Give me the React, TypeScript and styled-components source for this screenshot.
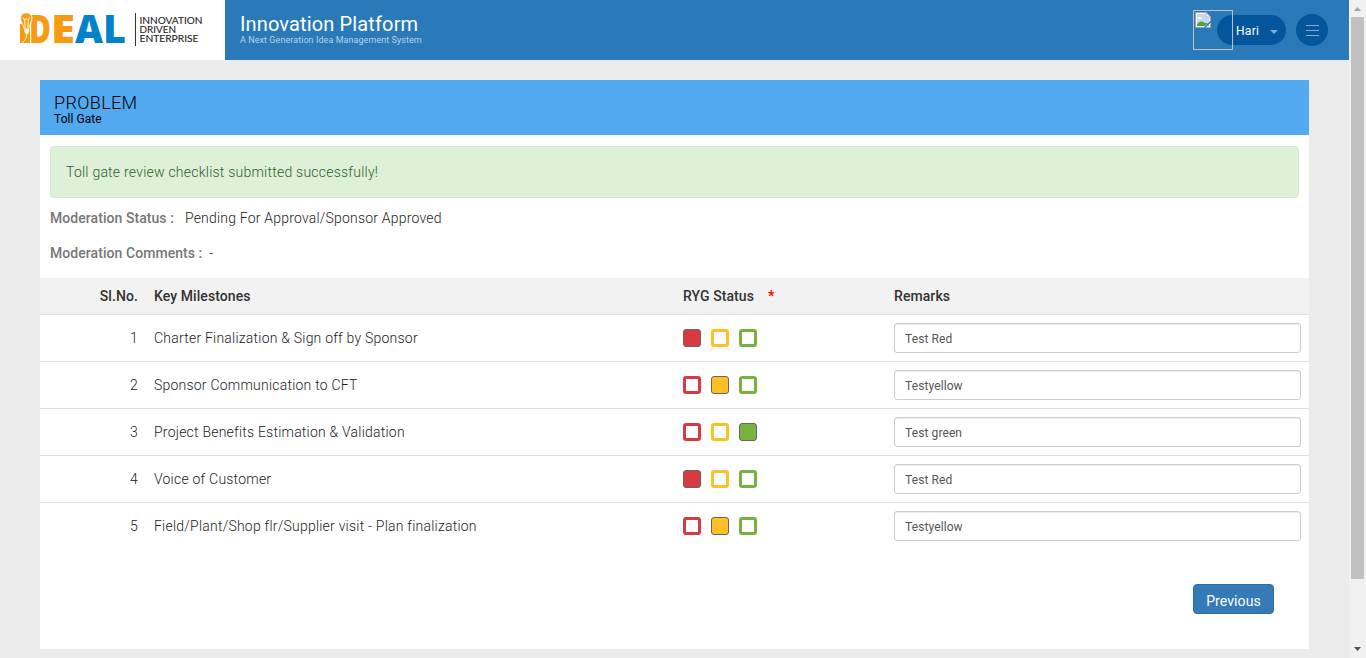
import React from "react";
import styled, { createGlobalStyle } from "styled-components";

const GlobalStyle = createGlobalStyle`
  * { box-sizing: border-box; }
  html, body { margin: 0; height: 100%; overflow: hidden; }
  body {
    font-family: Roboto, "Liberation Sans", sans-serif;
    font-size: 14px;
    line-height: 20px;
    color: #1c1c1c;
    background: #ebebeb;
  }
`;

const Window = styled.div`
  display: flex;
  height: 658px;
  overflow: hidden;
`;

const Page = styled.div`
  flex: 1;
  display: flex;
  flex-direction: column;
`;

const Header = styled.header`
  display: flex;
  height: 60px;
  background: #2a7aba;
`;

const LogoBox = styled.div`
  width: 225px;
  height: 60px;
  background: #fff;
`;

const Brand = styled.div`
  flex: 1;
  padding: 13px 0 0 15px;
  color: #fff;
`;

const BrandName = styled.div`
  font-size: 20px;
  line-height: 22px;
  letter-spacing: 0.14px;
`;

const BrandTag = styled.div`
  font-size: 9px;
  line-height: 10px;
  letter-spacing: 0.06px;
  color: #b4d2ea;
`;

const UserArea = styled.div`
  display: flex;
  align-items: flex-start;
  padding: 10px 21px 0 0;
`;

const Avatar = styled.div`
  position: relative;
  z-index: 1;
  width: 40px;
  height: 40px;
  margin-right: -16px;
  padding: 1px;
  border: 1px solid #c0c0c0;
  svg { display: block; }
`;

const UserPill = styled.div`
  display: flex;
  align-items: center;
  justify-content: space-between;
  width: 69px;
  height: 30px;
  margin: 5px 10px 0 0;
  padding: 1px 8px 0 19px;
  border-radius: 15px;
  background: #03569b;
  color: #fff;
  font-size: 12px;
  letter-spacing: 0.3px;
`;

const Caret = styled.span`
  margin-top: 3px;
  border: 4px solid transparent;
  border-top-color: #84aed1;
  border-bottom: 0;
`;

const MenuButton = styled.div`
  display: flex;
  flex-direction: column;
  align-items: center;
  justify-content: center;
  gap: 4px;
  width: 32px;
  height: 32px;
  margin-top: 4px;
  border-radius: 50%;
  background: #03569b;
`;

const MenuLine = styled.span`
  width: 13px;
  height: 1px;
  background: #84aed1;
`;

const Panel = styled.main`
  display: flex;
  flex-direction: column;
  height: 569px;
  margin: 20px 40px 0;
  background: #fff;
`;

const PanelHeader = styled.div`
  height: 55px;
  padding: 13px 14px 0;
  background: #52a9f0;
  color: #000;
`;

const PanelTitle = styled.div`
  font-size: 18px;
  font-weight: 300;
  line-height: 20px;
  letter-spacing: 0.35px;
`;

const PanelSubtitle = styled.div`
  font-size: 12px;
  line-height: 12px;
  letter-spacing: 0.05px;
`;

const Alert = styled.div`
  height: 52px;
  margin: 11px 10px 10px;
  padding: 15px;
  border: 1px solid #d0e9c6;
  border-radius: 4px;
  background: #dff0d8;
  color: #2a632b;
  font-weight: 300;
  letter-spacing: 0.23px;
`;

const Field = styled.div<{ $gap: number }>`
  display: flex;
  gap: ${(p) => p.$gap}px;
  height: 35px;
  padding: 0 10px;
  font-weight: 300;
  letter-spacing: 0.2px;
`;

const FieldLabel = styled.span`
  font-weight: 500;
  color: #777;
  letter-spacing: 0.06px;
`;

const Table = styled.div`
  display: flex;
  flex-direction: column;
`;

const Row = styled.div<{ $head?: boolean; $last?: boolean }>`
  display: grid;
  grid-template-columns: 106px 529px 211px 423px;
  align-items: center;
  height: ${(p) => (p.$head ? 37 : 47)}px;
  border-bottom: 1px solid ${(p) => (p.$last ? "transparent" : "#ddd")};
  background: ${(p) => (p.$head ? "#f2f2f2" : "#fff")};
  color: ${(p) => (p.$head ? "#333" : "#1c1c1c")};
  font-weight: ${(p) => (p.$head ? 500 : 300)};
  letter-spacing: ${(p) => (p.$head ? 0.08 : 0.22)}px;
`;

const Cell = styled.div<{ $right?: boolean }>`
  padding: 0 8px;
  text-align: ${(p) => (p.$right ? "right" : "left")};
`;

const Required = styled.span`
  margin-left: 14px;
  color: #f00;
  font-weight: 700;
`;

const Swatches = styled.div`
  display: flex;
  gap: 10px;
`;

const Swatch = styled.span<{ $color: string; $on: boolean }>`
  width: 18px;
  height: 18px;
  border: ${(p) => (p.$on ? "1px solid #666" : `3px solid ${p.$color}`)};
  border-radius: 3px;
  background: ${(p) => (p.$on ? p.$color : "#fff")};
`;

const Remark = styled.input`
  display: block;
  width: 100%;
  height: 30px;
  padding: 2px 10px 0;
  border: 1px solid #ccc;
  border-radius: 3px;
  box-shadow: inset 0 1px 1px rgba(0, 0, 0, 0.075);
  background: #fff;
  color: #555;
  font: 12px Roboto, "Liberation Sans", sans-serif;
  letter-spacing: 0.1px;
`;

const Actions = styled.div`
  display: flex;
  justify-content: flex-end;
  padding: 34px 35px 0;
`;

const Button = styled.button`
  width: 81px;
  height: 30px;
  padding: 3px 0 0;
  border: 1px solid #2e6da4;
  border-radius: 4px;
  background: #337ab7;
  color: #fff;
  font: 14px Roboto, "Liberation Sans", sans-serif;
  letter-spacing: 0.1px;
`;

const Scrollbar = styled.div`
  display: flex;
  flex-direction: column;
  align-items: center;
  width: 17px;
  height: 658px;
  background: #f1f1f1;
`;

const ScrollArrow = styled.svg`
  display: block;
  width: 17px;
  height: 17px;
`;

const ScrollThumb = styled.div`
  width: 13px;
  height: 562px;
  margin-bottom: 62px;
  background: #c1c1c1;
`;

const COLORS = ["#d73a41", "#ffbf26", "#78b13f"];

const ROWS = [
  { name: "Charter Finalization & Sign off by Sponsor", status: 0, remark: "Test Red" },
  { name: "Sponsor Communication to CFT", status: 1, remark: "Testyellow" },
  { name: "Project Benefits Estimation & Validation", status: 2, remark: "Test green" },
  { name: "Voice of Customer", status: 0, remark: "Test Red" },
  { name: "Field/Plant/Shop flr/Supplier visit - Plan finalization", status: 1, remark: "Testyellow" },
];

const Logo = () => (
  <svg width="225" height="60" viewBox="0 0 225 60">
    <g fontFamily="Open Sans" fontWeight="800" fontSize="39">
      <text x="29" y="43" fill="#f59c13" textLength="22" lengthAdjust="spacingAndGlyphs">D</text>
      <text x="51" y="43" fill="#f59c13" textLength="24" lengthAdjust="spacingAndGlyphs">E</text>
      <text x="75" y="43" fill="#0083ca" textLength="28" lengthAdjust="spacingAndGlyphs">A</text>
      <text x="103" y="43" fill="#0083ca" textLength="23" lengthAdjust="spacingAndGlyphs">L</text>
    </g>
    <path d="M20 24 H30 V43 H20 Z" fill="#f59c13" />
    <path
      d="M26 12.8 C22.6 12.8 20.6 15 20.6 18.2 C20.6 22 23.4 24 24.3 29 L28.7 29 C29.2 24 32 22 32 18.2 C32 15 29.5 12.8 26 12.8 Z"
      fill="#f59c13"
      stroke="#fff"
      strokeWidth="0.9"
    />
    <path
      d="M25.3 28 L24.6 20 L23.2 17.5 M27.9 28 L28.4 20 L29.8 17.2 M24.6 20 L26.5 18.5 L28.4 20"
      fill="none"
      stroke="#fff"
      strokeWidth="0.9"
    />
    <path d="M24.5 29 H29.2 V32 L27.8 34 H25.8 L24.5 32 Z" fill="#fff" />
    <path d="M26.8 33 C26.6 37 25.8 40 22 43" fill="none" stroke="#fff" strokeWidth="0.9" />
    <path d="M135.5 13 V46" stroke="#333" strokeWidth="1" />
    <g fontFamily="Lato" fontSize="9.6" fill="#222" stroke="#222" strokeWidth="0.1">
      <text x="139.5" y="23.7" textLength="63" lengthAdjust="spacingAndGlyphs">INNOVATION</text>
      <text x="139.5" y="33" textLength="36.5" lengthAdjust="spacingAndGlyphs">DRIVEN</text>
      <text x="139.5" y="42.2" textLength="59" lengthAdjust="spacingAndGlyphs">ENTERPRISE</text>
    </g>
  </svg>
);

const BrokenImage = () => (
  <svg width="16" height="16" viewBox="0 0 16 16">
    <path d="M.5 .5 H11 L15.5 5 V15.5 H.5 Z" fill="#fff" stroke="#a5a5a5" />
    <path d="M2 2 H10.5 V5.5 H14 V14 H2 Z" fill="#c4d7f5" />
    <path d="M3 6.5 C3 4.8 5 4.5 5.4 5.4 C6.8 5 7.5 6 7 7 H3 Z" fill="#fff" />
    <path d="M2 14 V12.5 C3.5 9.5 7 8.5 10 11 L14 11 V14 Z" fill="#4faa35" />
    <path d="M11 .5 V5 H15.5 Z" fill="#fff" stroke="#a5a5a5" strokeWidth=".8" />
    <path d="M16.5 7.5 L7.5 16.5 H10 L16.5 10 Z" fill="#2a7aba" stroke="#fff" strokeWidth=".4" />
  </svg>
);

export default function App() {
  return (
    <Window>
      <GlobalStyle />
      <Page>
        <Header>
          <LogoBox>
            <Logo />
          </LogoBox>
          <Brand>
            <BrandName>Innovation Platform</BrandName>
            <BrandTag>A Next Generation Idea Management System</BrandTag>
          </Brand>
          <UserArea>
            <Avatar>
              <BrokenImage />
            </Avatar>
            <UserPill>
              Hari
              <Caret />
            </UserPill>
            <MenuButton>
              <MenuLine />
              <MenuLine />
              <MenuLine />
            </MenuButton>
          </UserArea>
        </Header>
        <Panel>
          <PanelHeader>
            <PanelTitle>PROBLEM</PanelTitle>
            <PanelSubtitle>Toll Gate</PanelSubtitle>
          </PanelHeader>
          <Alert>Toll gate review checklist submitted successfully!</Alert>
          <Field $gap={11}>
            <FieldLabel>Moderation Status :</FieldLabel>
            <span>Pending For Approval/Sponsor Approved</span>
          </Field>
          <Field $gap={7}>
            <FieldLabel>Moderation Comments :</FieldLabel>
            <span>-</span>
          </Field>
          <Table>
            <Row $head>
              <Cell $right>Sl.No.</Cell>
              <Cell>Key Milestones</Cell>
              <Cell>
                RYG Status<Required>*</Required>
              </Cell>
              <Cell>Remarks</Cell>
            </Row>
            {ROWS.map((row, i) => (
              <Row key={i} $last={i === ROWS.length - 1}>
                <Cell $right>{i + 1}</Cell>
                <Cell>{row.name}</Cell>
                <Cell>
                  <Swatches>
                    {COLORS.map((color, c) => (
                      <Swatch key={color} $color={color} $on={row.status === c} />
                    ))}
                  </Swatches>
                </Cell>
                <Cell>
                  <Remark defaultValue={row.remark} />
                </Cell>
              </Row>
            ))}
          </Table>
          <Actions>
            <Button>Previous</Button>
          </Actions>
        </Panel>
      </Page>
      <Scrollbar>
        <ScrollArrow viewBox="0 0 17 17">
          <path d="M5 11 L8.5 7 L12 11 Z" fill="#a3a3a3" />
        </ScrollArrow>
        <ScrollThumb />
        <ScrollArrow viewBox="0 0 17 17">
          <path d="M5 6 L8.5 10 L12 6 Z" fill="#505050" />
        </ScrollArrow>
      </Scrollbar>
    </Window>
  );
}
